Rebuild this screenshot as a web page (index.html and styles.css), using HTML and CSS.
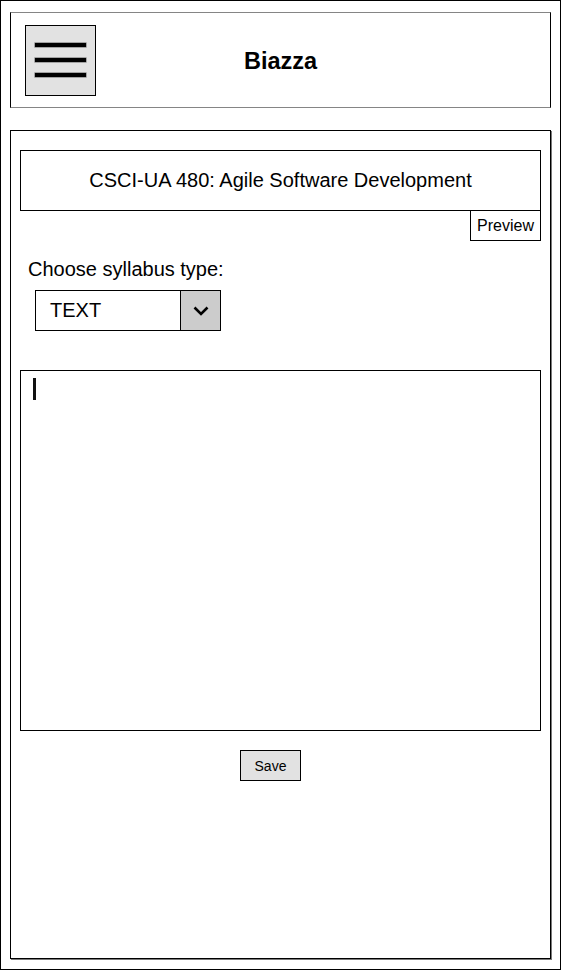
FILE: index.html
```html
<!DOCTYPE html>
<html lang="en">
<head>
<meta charset="utf-8">
<title>Biazza</title>
<link rel="stylesheet" href="styles.css">
</head>
<body>
<div class="frame">
  <header class="header">
    <div class="menu-btn">
      <span class="bar"></span>
      <span class="bar"></span>
      <span class="bar"></span>
    </div>
    <h1 class="brand">Biazza</h1>
    <div class="spacer"></div>
  </header>
  <main class="panel">
    <div class="course-title">CSCI-UA 480: Agile Software Development</div>
    <div class="preview-row"><div class="preview-btn">Preview</div></div>
    <div class="type-label">Choose syllabus type:</div>
    <div class="select">
      <div class="select-value">TEXT</div>
      <div class="select-arrow">
        <svg width="16" height="10" viewBox="0 0 16 10"><path d="M1.5 1.5 L8 8 L14.5 1.5" fill="none" stroke="#000" stroke-width="2.6"/></svg>
      </div>
    </div>
    <div class="editor"><span class="caret"></span></div>
    <div class="save-row"><div class="save-btn">Save</div></div>
  </main>
</div>
</body>
</html>
```

FILE: styles.css
```css
html, body {
  margin: 0;
  padding: 0;
  background: #fff;
}
body {
  font-family: "Liberation Sans", Arial, Helvetica, sans-serif;
  color: #000;
}
.frame {
  box-sizing: border-box;
  width: 561px;
  height: 970px;
  border: 1px solid #000;
  padding: 11px 9px 0 9px;
}
.header {
  box-sizing: border-box;
  height: 96px;
  border-top: 1px solid #858585;
  border-bottom: 1px solid #858585;
  border-left: 1px solid #000;
  border-right: 1px solid #000;
  padding: 0 14px;
  display: grid;
  grid-template-columns: 71px 1fr 71px;
  align-items: center;
}
.menu-btn {
  box-sizing: border-box;
  width: 71px;
  height: 71px;
  background: #e2e2e2;
  border: 1px solid #000;
  padding: 17px 9px 0 9px;
  display: flex;
  flex-direction: column;
  gap: 11px;
}
.bar {
  display: block;
  height: 4px;
  background: #000;
  box-shadow: 0 0 0 0.6px #777;
}
.brand {
  margin: 0;
  padding-top: 2px;
  text-align: center;
  font-size: 23.5px;
  font-weight: bold;
  line-height: 26px;
}
.panel {
  box-sizing: border-box;
  margin-top: 22px;
  height: 829px;
  border: 1px solid #000;
  box-shadow: 1px 1px 0 #7a7a7a;
  padding: 19px 9px 0 9px;
}
.course-title {
  box-sizing: border-box;
  height: 61px;
  border: 1px solid #000;
  display: flex;
  align-items: center;
  justify-content: center;
  font-size: 20px;
}
.preview-row {
  display: flex;
  justify-content: flex-end;
}
.preview-btn {
  box-sizing: border-box;
  width: 71px;
  height: 31px;
  margin-top: -1px;
  border: 1px solid #000;
  display: flex;
  align-items: center;
  justify-content: center;
  font-size: 16px;
}
.type-label {
  margin: 17px 0 0 8px;
  font-size: 20px;
  line-height: 22px;
}
.select {
  box-sizing: border-box;
  margin: 10px 0 0 15px;
  width: 186px;
  height: 41px;
  border: 1px solid #000;
  display: flex;
}
.select-value {
  flex: 1;
  display: flex;
  align-items: center;
  padding-left: 14px;
  font-size: 20px;
}
.select-arrow {
  box-sizing: border-box;
  width: 40px;
  border-left: 1px solid #000;
  background: #cccccc;
  display: flex;
  align-items: center;
  justify-content: center;
}
.editor {
  box-sizing: border-box;
  margin-top: 39px;
  height: 361px;
  border: 1px solid #000;
  padding: 7px 12px;
}
.caret {
  display: block;
  width: 3px;
  height: 22px;
  background: #111;
}
.save-row {
  margin-top: 19px;
  padding-left: 220px;
}
.save-btn {
  box-sizing: border-box;
  width: 61px;
  height: 31px;
  background: #e2e2e2;
  border: 1px solid #000;
  display: flex;
  align-items: center;
  justify-content: center;
  font-size: 14px;
}
```
